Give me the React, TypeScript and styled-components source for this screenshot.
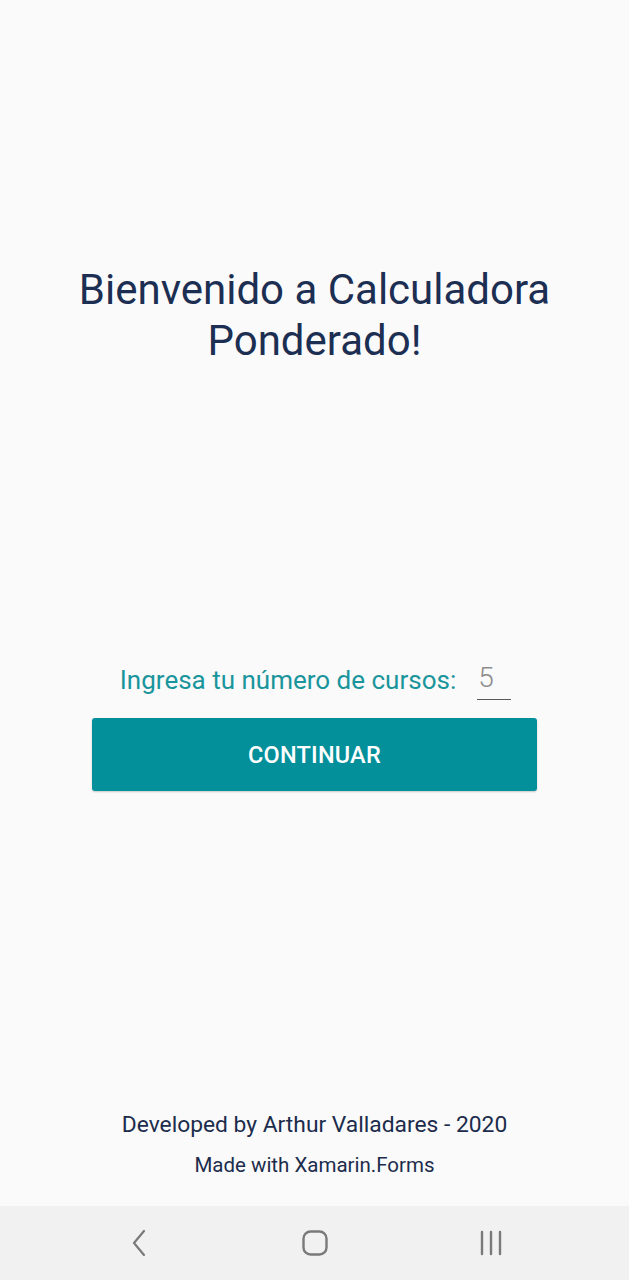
import React from "react";
import styled, { createGlobalStyle } from "styled-components";

const Global = createGlobalStyle`
  html, body { margin: 0; padding: 0; background: #fafafa; }
  * { box-sizing: border-box; }
`;

const Screen = styled.div`
  width: 629px;
  height: 1280px;
  display: flex;
  flex-direction: column;
  background: #fafafa;
  font-family: Roboto, "Liberation Sans", sans-serif;
`;

const Content = styled.main`
  flex: 1;
  display: flex;
  flex-direction: column;
  align-items: center;
`;

const Title = styled.h1`
  margin: 264px 0 0;
  font-weight: 400;
  font-size: 42px;
  line-height: 51px;
  color: #1c2f53;
  text-align: center;
  width: 500px;
`;

const Form = styled.section`
  margin-top: 290px;
  width: 445px;
  display: flex;
  flex-direction: column;
  align-items: center;
`;

const Row = styled.div`
  display: flex;
  align-items: flex-end;
  gap: 21px;
  height: 44px;
  padding-left: 2px;
`;

const Label = styled.span`
  font-size: 26px;
  line-height: 32px;
  color: #1a959c;
  padding-bottom: 4px;
`;

const Entry = styled.div`
  width: 34px;
  border-bottom: 1.5px solid #5a5a5a;
  font-size: 28px;
  font-weight: 300;
  line-height: 32px;
  color: #8c8c8c;
  padding: 0 0 5px 1px;
`;

const Button = styled.button`
  margin-top: 18px;
  width: 445px;
  height: 73px;
  border: none;
  border-radius: 3px;
  background: #03909b;
  color: #ffffff;
  font-family: Roboto, "Liberation Sans", sans-serif;
  font-weight: 500;
  font-size: 23.5px;
  letter-spacing: 0.2px;
  box-shadow: 0 1px 2px rgba(0, 0, 0, 0.2);
`;

const Footer = styled.footer`
  margin-top: auto;
  padding-bottom: 28px;
  display: flex;
  flex-direction: column;
  align-items: center;
  color: #1c2c4c;
`;

const Credit = styled.div<{ $size: number; $lh: number; $gap?: number }>`
  font-size: ${(p) => p.$size}px;
  line-height: ${(p) => p.$lh}px;
  margin-top: ${(p) => p.$gap ?? 0}px;
`;

const NavBar = styled.nav`
  height: 74px;
  background: #f1f1f1;
  display: grid;
  grid-template-columns: repeat(3, 176px);
  justify-content: center;
  align-items: center;
  justify-items: center;
`;

const NavIcon = styled.svg`
  display: block;
`;

export default function App() {
  return (
    <>
      <Global />
      <Screen>
        <Content>
          <Title>Bienvenido a Calculadora Ponderado!</Title>
          <Form>
            <Row>
              <Label>Ingresa tu número de cursos:</Label>
              <Entry>5</Entry>
            </Row>
            <Button>CONTINUAR</Button>
          </Form>
          <Footer>
            <Credit $size={22.8} $lh={30}>Developed by Arthur Valladares - 2020</Credit>
            <Credit $size={20.5} $lh={26} $gap={12}>
              Made with Xamarin.Forms
            </Credit>
          </Footer>
        </Content>
        <NavBar>
          <NavIcon width="20" height="28" viewBox="0 0 20 28">
            <path d="M15 2 L5 14 L15 26" fill="none" stroke="#7a7a7a" strokeWidth="2.2" strokeLinecap="round" strokeLinejoin="round" />
          </NavIcon>
          <NavIcon width="28" height="28" viewBox="0 0 28 28">
            <rect x="2.5" y="2.5" width="23" height="23" rx="7" fill="none" stroke="#7a7a7a" strokeWidth="2.4" />
          </NavIcon>
          <NavIcon width="24" height="28" viewBox="0 0 24 28">
            <path d="M3 3 V25 M12 3 V25 M21 3 V25" fill="none" stroke="#7a7a7a" strokeWidth="2.4" strokeLinecap="round" />
          </NavIcon>
        </NavBar>
      </Screen>
    </>
  );
}
